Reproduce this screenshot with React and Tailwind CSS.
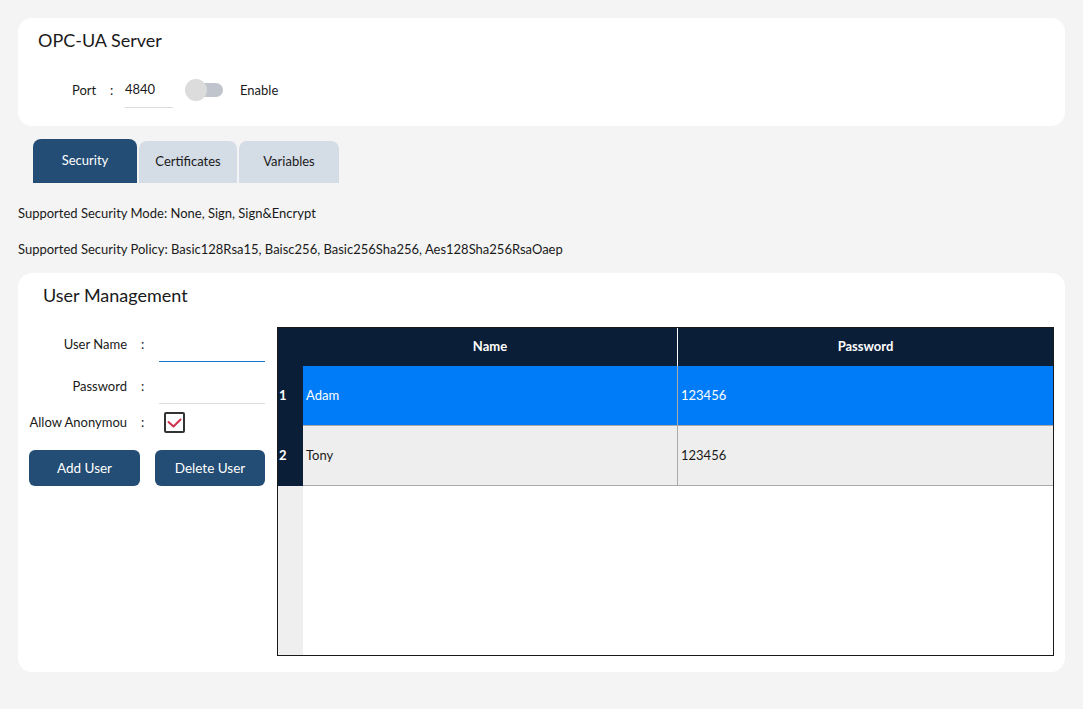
export default function App() {
  const users = [
    { id: 1, name: "Adam", password: "123456" },
    { id: 2, name: "Tony", password: "123456" },
  ];

  return (
    <div
      className="min-h-screen w-full bg-[#f4f4f4] px-[18px] pt-[18px] pb-9 text-[13px] text-[#1a1a1a]"
      style={{ fontFamily: 'Lato, "Liberation Sans", sans-serif' }}
    >
      {/* server card */}
      <div className="h-[108px] rounded-[14px] bg-white px-5 pt-[10px]">
        <h2 className="text-[18px] leading-6">OPC-UA Server</h2>
        <div className="mt-[21px] flex items-center">
          <span className="ml-[34px] w-[38px]">Port</span>
          <span className="w-[15px]">:</span>
          <div className="w-[48px] border-b border-[#dddddd] py-[7px]">4840</div>
          <div className="relative ml-[12px] h-[22px] w-[38px]">
            <div className="absolute left-[10px] top-[4px] h-[14px] w-[28px] rounded-full bg-[#c0c4cc]" />
            <div className="absolute left-0 top-0 h-[22px] w-[22px] rounded-full bg-[#dcdcdc]" />
          </div>
          <span className="ml-[17px]">Enable</span>
        </div>
      </div>

      {/* tabs */}
      <div className="mt-[13px] flex gap-[2px] pl-[15px]">
        <div className="flex h-[44px] w-[104px] items-center justify-center rounded-t-[8px] bg-[#234d74] text-white">Security</div>
        <div className="mt-[2px] flex h-[42px] w-[98px] items-center justify-center rounded-t-[8px] bg-[#d4dce6]">Certificates</div>
        <div className="mt-[2px] flex h-[42px] w-[100px] items-center justify-center rounded-t-[8px] bg-[#d4dce6]">Variables</div>
      </div>

      <p className="mt-[20px] leading-5">Supported Security Mode: None, Sign, Sign&amp;Encrypt</p>
      <p className="mt-[16px] leading-5">
        Supported Security Policy: Basic128Rsa15, Baisc256, Basic256Sha256, Aes128Sha256RsaOaep
      </p>

      {/* user management */}
      <div className="mt-[14px] h-[399px] rounded-[14px] bg-white pl-[11px] pr-[11px] pt-[10px]">
        <h2 className="pl-[14px] text-[18px] leading-6">User Management</h2>
        <div className="mt-[20px] flex gap-[12px]">
          <div className="w-[236px] pt-[1px]">
            <div className="flex items-center">
              <span className="w-[98px] text-right">User Name</span>
              <span className="ml-[14px] w-[18px]">:</span>
              <div className="h-[34px] w-[106px] border-b border-[#1677d2]" />
            </div>
            <div className="mt-[8px] flex items-center">
              <span className="w-[98px] text-right">Password</span>
              <span className="ml-[14px] w-[18px]">:</span>
              <div className="h-[34px] w-[106px] border-b border-[#dddddd]" />
            </div>
            <div className="mt-[8px] flex items-center">
              <span className="w-[98px] text-right whitespace-nowrap">Allow Anonymou</span>
              <span className="ml-[14px] w-[23px]">:</span>
              <div className="flex h-[21px] w-[21px] items-center justify-center rounded-[2px] border-2 border-[#333333]">
                <svg width="15" height="10" viewBox="0 0 15 10" fill="none">
                  <path d="M1.5 4 L6.5 8.5 L13.5 1.5" stroke="#d0314a" strokeWidth="2" strokeLinecap="round" strokeLinejoin="round" />
                </svg>
              </div>
            </div>
            <div className="mt-[17px] flex gap-[15px]">
              <button className="h-[36px] w-[111px] rounded-[6px] bg-[#234d74] text-[13.5px] text-white">Add User</button>
              <button className="h-[36px] w-[110px] rounded-[6px] bg-[#234d74] text-[13.5px] text-white">Delete User</button>
            </div>
          </div>

          {/* table */}
          <div className="flex h-[329px] w-[777px] flex-col border border-[#1a1a1a] bg-white">
            <div className="flex h-[38px] bg-[#0b1e37] font-bold text-white">
              <div className="w-[25px]" />
              <div className="flex flex-1 items-center justify-center border-r border-white">Name</div>
              <div className="flex w-[375px] items-center justify-center">Password</div>
            </div>
            {users.map((u, i) => (
              <div key={u.id} className="flex h-[60px]">
                <div className="flex w-[25px] items-center bg-[#0b1e37] pl-[1px] text-white font-bold">{u.id}</div>
                <div
                  className={
                    i === 0
                      ? "flex flex-1 items-center border-b border-r border-[#aaaaaa] bg-[#007cf8] pl-[3px] text-white"
                      : "flex flex-1 items-center border-b border-r border-[#aaaaaa] bg-[#eeeeee] pl-[3px]"
                  }
                >
                  {u.name}
                </div>
                <div
                  className={
                    i === 0
                      ? "flex w-[375px] items-center border-b border-[#aaaaaa] bg-[#007cf8] pl-[3px] text-white"
                      : "flex w-[375px] items-center border-b border-[#aaaaaa] bg-[#eeeeee] pl-[3px]"
                  }
                >
                  {u.password}
                </div>
              </div>
            ))}
            <div className="flex flex-1">
              <div className="w-[25px] bg-[#efefef]" />
              <div className="flex-1" />
            </div>
          </div>
        </div>
      </div>
    </div>
  );
}
